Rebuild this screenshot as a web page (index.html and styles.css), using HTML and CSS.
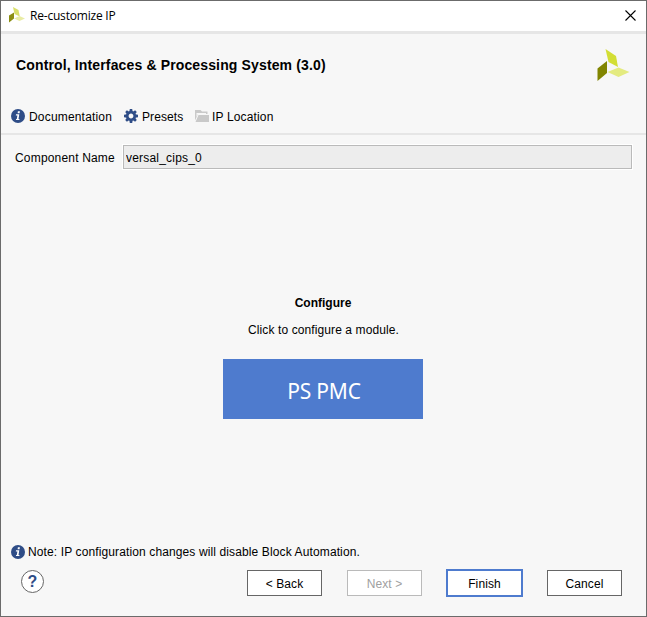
FILE: index.html
```html
<!DOCTYPE html>
<html lang="en">
<head>
<meta charset="utf-8">
<title>Re-customize IP</title>
<link rel="stylesheet" href="styles.css">
</head>
<body>
<svg width="0" height="0" class="defs">
  <symbol id="logo" viewBox="0 0 32 32"><path fill="#d3de35" d="M8 0 18.500 7 20.500 18 11 13z"/><path fill="#818500" d="M0 19.500 9.500 12v12L0 32z"/><path fill="#e4eb80" d="M10 23 21 18.500 32 23 21 28z"/></symbol>
  <symbol id="info" viewBox="0 0 14 14"><circle cx="7" cy="7" r="7" fill="#2f4d87"/><path fill="#fff" d="M6.900 2.300h2L8.600 4.200h-2zM5 5.300h3.300L7.500 9.900h1l-.2 1.200H4.900l.2-1.200h.7l.6-3.400H4.800z"/></symbol>
</svg>
<div class="window">
  <div class="titlebar">
    <svg class="app-icon" viewBox="0 0 16 16"><path fill="#d9df6a" d="M4 0 9.500 3 10.800 9.500 5.500 7z"/><path fill="#8b8e12" d="M0 8.500 5 5.500v6L0 15.500z"/><path fill="#e9eca5" d="M5 11.500 10.500 9 16 11.500 10.500 14z"/></svg>
    <span class="title">Re-customize IP</span>
    <svg class="close" viewBox="0 0 11 11"><path d="M.5.5l10 10M10.500.5l-10 10" stroke="#000" stroke-width="1.100"/></svg>
  </div>
  <header class="header">
    <h1>Control, Interfaces &amp; Processing System (3.0)</h1>
    <svg class="logo"><use href="#logo"/></svg>
  </header>
  <nav class="toolbar">
    <svg class="info"><use href="#info"/></svg><span>Documentation</span>
    <svg class="gear" viewBox="-7 -7 14 14"><g fill="#2f4d87"><path id="tooth" d="M-1.200-7h2.400l.5 3h-3.400zM-1.200 7h2.400l.5-3h-3.400z"/><use href="#tooth" transform="rotate(45)"/><use href="#tooth" transform="rotate(90)"/><use href="#tooth" transform="rotate(135)"/></g><circle r="3.700" fill="none" stroke="#2f4d87" stroke-width="2.600"/></svg><span>Presets</span>
    <svg class="folder" viewBox="0 0 14 12"><path fill="#c9c9c9" d="M0 0h5.500L7 1.500h5.500V4H3L0 10.500zM3.500 5H14v7H.5z"/><path fill="#f7f7f7" d="M1.500 3h9.500v1H3L1.500 7z"/></svg><span>IP Location</span>
  </nav>
  <div class="field"><label for="name">Component Name</label><input id="name" value="versal_cips_0" readonly></div>
  <main class="content">
    <h2>Configure</h2>
    <p><span>Click to configure a module.</span></p>
    <button class="module">PS PMC</button>
  </main>
  <div class="note"><svg class="info"><use href="#info"/></svg><span>Note: IP configuration changes will disable Block Automation.</span></div>
  <footer class="actions">
    <button class="help">?</button>
    <button class="btn back">&lt; Back</button>
    <button class="btn next" disabled>Next &gt;</button>
    <button class="btn finish">Finish</button>
    <button class="btn cancel">Cancel</button>
  </footer>
</div>
</body>
</html>
```
FILE: styles.css
```css
* { box-sizing: border-box; }
body { margin: 0; font: 12px/16px "Liberation Sans", Arial, sans-serif; color: #000; }
svg { display: block; flex: none; }
.defs { position: absolute; }
span, label, h1, h2 { white-space: nowrap; }
button, input { font: inherit; margin: 0; padding: 0; border-radius: 0; color: inherit; }
.window { width: 647px; height: 617px; border: 1px solid #6b6b6b; background: #f7f7f7; display: flex; flex-direction: column; overflow: hidden; }
.titlebar { height: 33px; background: #fff; border-bottom: 3px solid #e6e6e6; display: flex; align-items: center; padding: 0 10px 0 8px; flex: none; }
.app-icon { width: 16px; height: 16px; margin-top: -2px; }
.title { font: 12px/16px "Open Sans", "Noto Sans", sans-serif; letter-spacing: -0.200px; margin-left: 5px; }
.close { width: 11px; height: 11px; margin: -2px 0 0 auto; }
.header { height: 68px; display: flex; align-items: flex-start; padding: 15px 16px 0 15px; flex: none; }
h1 { font-size: 14px; line-height: 16px; margin: 8px 0 0; letter-spacing: 0.140px; }
.logo { width: 33px; height: 32px; margin-left: auto; }
.toolbar { height: 33px; display: flex; align-items: flex-start; padding: 7px 0 0 10px; border-bottom: 2px solid #e6e6e6; flex: none; }
.info { width: 14px; height: 14px; }
.toolbar .info + span { margin-left: 4px; width: 95px; letter-spacing: 0.180px; }
.gear { width: 14px; height: 14px; }
.gear + span { margin-left: 4px; width: 53px; letter-spacing: 0.100px; }
.toolbar .folder { width: 14px; height: 12px; margin-top: 1px; }
.folder + span { margin-left: 3px; letter-spacing: 0.150px; }
.field { display: flex; align-items: center; margin: 10px 14px 0; height: 24px; flex: none; }
.field label { width: 108px; letter-spacing: 0.180px; padding-top: 1px; }
.field input { width: 509px; height: 24px; border: 1px solid #bababa; background: #ededed; padding: 1px 2px 0; box-shadow: 0 0 0 1px #fff; outline: none; letter-spacing: 0.200px; }
.content { flex: 1; display: flex; flex-direction: column; align-items: center; padding: 126px 1px 0 0; }
h2 { font-size: 12px; line-height: 16px; margin: 0; letter-spacing: 0; }
.content p { margin: 11px 0 21px; letter-spacing: 0.100px; padding-left: 1px; }
.module { width: 200px; height: 60px; border: 0; background: #4e7bce; color: #fff; font: 21px/24px "Noto Sans", sans-serif; letter-spacing: -0.200px; padding-top: 3px; padding-left: 2px; }
.note { height: 16px; display: flex; align-items: center; padding-left: 10px; flex: none; }
.note span { margin-left: 3px; letter-spacing: 0.120px; }
.actions { height: 56px; display: flex; align-items: flex-start; padding: 10px 24px 0 20px; flex: none; }
.help { width: 23px; height: 23px; border: 1px solid #666; border-radius: 50%; background: #fff; color: #2f4d87; font: bold 16px/20px "Liberation Sans", sans-serif; margin-right: 203px; padding-top: 1px; }
.btn { width: 75px; height: 26px; border: 1px solid #666; background: #fff; letter-spacing: 0.100px; padding-top: 1px; }
.next { margin-left: 25px; border-color: #bababa; color: #a0a0a0; }
.finish { width: 77px; height: 28px; border: 2px solid #4e7bce; margin: -1px 0 0 24px; }
.cancel { margin-left: 24px; }
```
